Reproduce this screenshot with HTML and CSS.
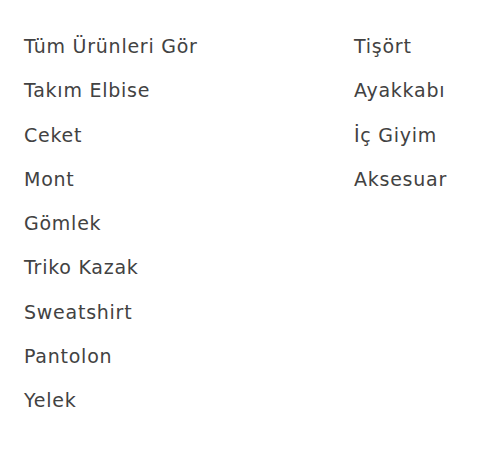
FILE: index.html
```html
<!DOCTYPE html>
<html lang="tr">
<head>
<meta charset="utf-8">
<link rel="stylesheet" href="styles.css">
</head>
<body>
<nav class="menu">
  <ul class="col col-1">
    <li><a href="#">Tüm Ürünleri Gör</a></li>
    <li><a href="#">Takım Elbise</a></li>
    <li><a href="#">Ceket</a></li>
    <li><a href="#">Mont</a></li>
    <li><a href="#">Gömlek</a></li>
    <li><a href="#">Triko Kazak</a></li>
    <li><a href="#">Sweatshirt</a></li>
    <li><a href="#">Pantolon</a></li>
    <li><a href="#">Yelek</a></li>
  </ul>
  <ul class="col col-2">
    <li><a href="#">Tişört</a></li>
    <li><a href="#">Ayakkabı</a></li>
    <li><a href="#">İç Giyim</a></li>
    <li><a href="#">Aksesuar</a></li>
  </ul>
</nav>
</body>
</html>
```
FILE: styles.css
```css
html, body {
  margin: 0;
  padding: 0;
  background: #fff;
}
.menu {
  display: flex;
  padding: 24px 0 0 24px;
  font-family: "DejaVu Sans", sans-serif;
  font-size: 19px;
  letter-spacing: 0.75px;
  color: #424242;
}
.col {
  list-style: none;
  margin: 0;
  padding: 0;
  display: flex;
  flex-direction: column;
}
.col-1 {
  width: 330px;
}
.col li {
  height: 44.3px;
  line-height: 44px;
  margin: 0;
}
.col a {
  color: inherit;
  text-decoration: none;
}
```
